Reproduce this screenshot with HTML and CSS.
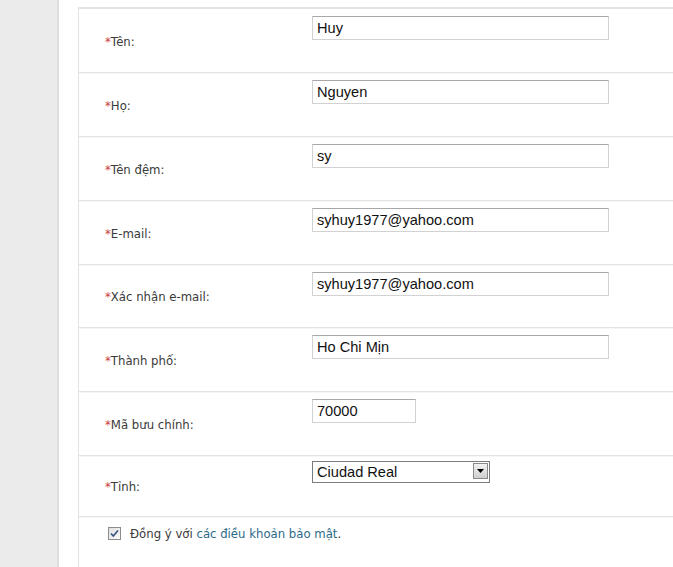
FILE: index.html
```html
<!DOCTYPE html>
<html lang="vi">
<head>
<meta charset="utf-8">
<link rel="stylesheet" href="styles.css">
</head>
<body>
<div class="page">
  <div class="sidebar"></div>
  <div class="main">
    <div class="form">
      <div class="row">
        <label class="label"><span class="req">*</span>Tên:</label>
        <div class="field"><input class="text" type="text" value="Huy"></div>
      </div>
      <div class="row">
        <label class="label"><span class="req">*</span>Họ:</label>
        <div class="field"><input class="text" type="text" value="Nguyen"></div>
      </div>
      <div class="row">
        <label class="label"><span class="req">*</span>Tên đệm:</label>
        <div class="field"><input class="text" type="text" value="sy"></div>
      </div>
      <div class="row">
        <label class="label"><span class="req">*</span>E-mail:</label>
        <div class="field"><input class="text" type="text" value="syhuy1977@yahoo.com"></div>
      </div>
      <div class="row short-row">
        <label class="label"><span class="req">*</span>Xác nhận e-mail:</label>
        <div class="field"><input class="text" type="text" value="syhuy1977@yahoo.com"></div>
      </div>
      <div class="row">
        <label class="label"><span class="req">*</span>Thành phố:</label>
        <div class="field"><input class="text" type="text" value="Ho Chi Mịn"></div>
      </div>
      <div class="row">
        <label class="label"><span class="req">*</span>Mã bưu chính:</label>
        <div class="field"><input class="text short" type="text" value="70000"></div>
      </div>
      <div class="row last">
        <label class="label"><span class="req">*</span>Tỉnh:</label>
        <div class="field">
          <div class="select">
            <select>
              <option>Ciudad Real</option>
            </select>
            <span class="select-btn">
              <svg width="7" height="4" viewBox="0 0 7 4"><path d="M0 0H7L3.5 4Z" fill="#000"/></svg>
            </span>
          </div>
        </div>
      </div>
      <div class="agree">
        <span class="check">
          <svg width="11" height="11" viewBox="0 0 11 11"><path d="M2 5.5L4.3 8L9 2.5" fill="none" stroke="#3a5680" stroke-width="1.7"/></svg>
        </span>
        <span class="agree-text">Đồng ý với <a class="link" href="#">các điều khoản bảo mật</a>.</span>
      </div>
    </div>
  </div>
</div>
</body>
</html>
```

FILE: styles.css
```css
html, body {
  margin: 0;
  padding: 0;
  background: #fff;
}
.page {
  display: flex;
  height: 567px;
  overflow: hidden;
}
.sidebar {
  width: 57px;
  flex: none;
  background: #ebebeb;
  border-right: 2px solid #dedede;
}
.main {
  flex: 1;
  background: #fff;
  padding: 7px 0 0 19px;
}
.form {
  border-left: 1px solid #e2e2e2;
  border-top: 2px solid #e4e4e4;
  height: 100%;
}
.row {
  display: grid;
  grid-template-columns: 233px 1fr;
  height: 63px;
  border-bottom: 1px solid #e4e4e4;
  box-shadow: 0 1px 0 #f6f6f6;
}
.row.short-row {
  height: 62px;
}
.row.last {
  height: 60px;
}
.label {
  align-self: center;
  padding: 1px 0 0 26px;
  font-family: "DejaVu Sans Condensed", "DejaVu Sans", Verdana, sans-serif;
  font-size: 13px;
  color: #3a3a3a;
}
.req {
  color: #c83c3c;
}
.field {
  padding-top: 7px;
}
.row.last .field {
  padding-top: 5px;
}
.text {
  box-sizing: border-box;
  width: 297px;
  height: 24px;
  margin: 0;
  padding: 0 4px 1px;
  border: 1px solid #d2d2d2;
  border-top-color: #a8a8a8;
  font-family: "Liberation Sans", Arial, sans-serif;
  font-size: 14.6px;
  color: #111;
  outline: none;
}
.text.short {
  width: 104px;
}
.select {
  position: relative;
  width: 178px;
  height: 22px;
  box-sizing: border-box;
  border: 1px solid #7c7c7c;
  background: #fff;
}
.select select {
  appearance: none;
  -webkit-appearance: none;
  border: 0;
  margin: 0;
  padding: 0 4px 1px;
  width: 100%;
  height: 100%;
  background: transparent;
  font-family: "Liberation Sans", Arial, sans-serif;
  font-size: 14.6px;
  color: #111;
  outline: none;
}
.select-btn {
  position: absolute;
  right: 1px;
  top: 1px;
  width: 15px;
  height: 16px;
  box-sizing: border-box;
  border: 1px solid #8a8a8a;
  background: linear-gradient(#f2f2f2, #cfcfcf);
  display: flex;
  align-items: center;
  justify-content: center;
}
.agree {
  display: flex;
  align-items: center;
  gap: 9px;
  padding: 9px 0 0 29px;
  font-family: "DejaVu Sans Condensed", "DejaVu Sans", Verdana, sans-serif;
  font-size: 13px;
  color: #3a3a3a;
}
.check {
  width: 13px;
  height: 13px;
  box-sizing: border-box;
  border: 1px solid #8c8c8c;
  background: linear-gradient(135deg, #e0e0e0, #fafafa);
  display: flex;
  align-items: center;
  justify-content: center;
}
.link {
  color: #2d6a88;
  text-decoration: none;
}
```
